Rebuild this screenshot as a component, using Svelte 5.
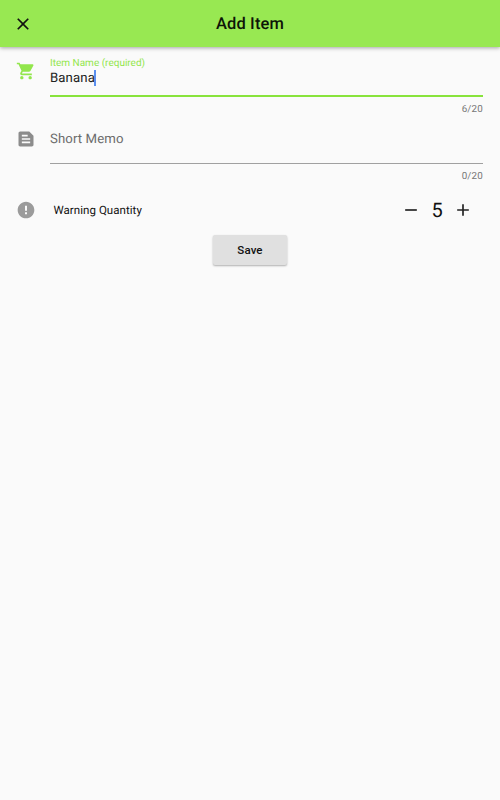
<script>
  let name = $state('Banana');
  let memo = $state('');
  let quantity = $state(5);
  const limit = 20;
</script>

<div class="screen">
  <header>
    <svg class="close" viewBox="0 0 24 24"><path d="M19 6.41 17.59 5 12 10.59 6.41 5 5 6.41 10.59 12 5 17.59 6.41 19 12 13.41 17.59 19 19 17.59 13.41 12z" /></svg>
    <h1>Add Item</h1>
  </header>

  <main>
    <section class="row item">
      <svg class="icon cart" viewBox="0 0 24 24"><path d="M7 18c-1.1 0-1.99.9-1.99 2S5.9 22 7 22s2-.9 2-2-.9-2-2-2zM1 2v2h2l3.6 7.59-1.35 2.45c-.16.28-.25.61-.25.96 0 1.1.9 2 2 2h12v-2H7.42c-.14 0-.25-.11-.25-.25l.03-.12.9-1.63h7.45c.75 0 1.41-.41 1.75-1.03l3.58-6.49c.08-.14.12-.31.12-.48 0-.55-.45-1-1-1H5.21l-.94-2H1zm16 16c-1.1 0-1.99.9-1.99 2s.89 2 1.99 2 2-.9 2-2-.9-2-2-2z" /></svg>
      <div class="field">
        <div class="label">Item Name (required)</div>
        <div class="value"><span>{name}</span><i class="caret"></i></div>
        <div class="line active"></div>
        <div class="count">{name.length}/{limit}</div>
      </div>
    </section>

    <section class="row memo">
      <svg class="icon note" viewBox="0 0 24 24"><path fill-rule="evenodd" d="M15.9 3H5c-1.1 0-2 .9-2 2v14c0 1.1.9 2 2 2h14c1.1 0 2-.9 2-2V8.1L15.9 3zM7 7h7v2H7V7zm10 10H7v-2h10v2zm0-4H7v-2h10v2z" /></svg>
      <div class="field">
        <div class="placeholder">Short Memo</div>
        <div class="line"></div>
        <div class="count">{memo.length}/{limit}</div>
      </div>
    </section>

    <section class="row warning">
      <svg class="icon alert" viewBox="0 0 24 24"><path d="M12 2C6.48 2 2 6.48 2 12s4.48 10 10 10 10-4.48 10-10S17.52 2 12 2zm1.2 15.2h-2.4v-2.4h2.4v2.4zm0-4.2h-2.4V6.8h2.4v6.2z" /></svg>
      <span class="caption">Warning Quantity</span>
      <div class="stepper">
        <svg viewBox="0 0 24 24"><path d="M19 13H5v-2h14v2z" /></svg>
        <span>{quantity}</span>
        <svg viewBox="0 0 24 24"><path d="M19 13h-6v6h-2v-6H5v-2h6V5h2v6h6v2z" /></svg>
      </div>
    </section>

    <button>Save</button>
  </main>
</div>

<style>
  :global(body) {
    background: #fafafa;
  }
  .screen {
    height: 800px;
    background: #fafafa;
    color: #111;
    font-family: Roboto, sans-serif;
    text-rendering: geometricPrecision;
  }
  header {
    display: flex;
    align-items: center;
    height: 47px;
    padding: 0 13px;
    box-sizing: border-box;
    background: #98e852;
    box-shadow: 0 1px 4px rgba(0, 0, 0, 0.35);
  }
  .close {
    width: 20px;
    height: 20px;
    fill: #111;
  }
  h1 {
    flex: 1;
    margin: 2px 20px 0 0;
    text-align: center;
    font-size: 16.5px;
    font-weight: 500;
    letter-spacing: 0.1px;
    line-height: 20px;
    color: #0d1507;
  }
  main {
    display: flex;
    flex-direction: column;
    padding: 0 17px 0 16px;
  }
  .row {
    display: flex;
  }
  .icon {
    flex: none;
    width: 20px;
    height: 20px;
    margin-right: 14px;
    fill: #8c8c8c;
  }
  .field {
    flex: 1;
  }
  .item {
    height: 74px;
    padding-top: 10px;
    box-sizing: border-box;
  }
  .cart {
    margin-top: 4px;
    fill: #92e64c;
  }
  .note {
    margin-top: 8px;
  }
  .label {
    height: 12px;
    font-size: 10px;
    line-height: 13px;
    color: #92e64c;
  }
  .value {
    display: flex;
    height: 26px;
    font-size: 13.2px;
    line-height: 20px;
    letter-spacing: 0.1px;
    color: #222;
  }
  .caret {
    width: 2px;
    height: 16px;
    margin-top: 1px;
    margin-left: -0.5px;
    background: #5b8fee;
  }
  .line {
    height: 1px;
    background: #a0a0a0;
  }
  .line.active {
    height: 2px;
    background: #88e33c;
  }
  .count {
    margin-top: 6px;
    text-align: right;
    font-size: 9.8px;
    line-height: 14px;
    letter-spacing: 0.2px;
    color: #777;
  }
  .memo {
    height: 69px;
  }
  .placeholder {
    height: 42px;
    padding-top: 9px;
    box-sizing: border-box;
    font-size: 13.2px;
    line-height: 20px;
    letter-spacing: 0.1px;
    color: #6c6c6c;
  }
  .warning {
    height: 40px;
    align-items: center;
  }
  .alert {
    fill: #9b9b9b;
  }
  .caption {
    flex: 1;
    padding-left: 3.5px;
    font-size: 11.5px;
    letter-spacing: 0.05px;
  }
  .stepper {
    display: flex;
    align-items: center;
    padding-right: 10px;
  }
  .stepper svg {
    width: 20px;
    height: 20px;
    fill: #222;
  }
  .stepper span {
    width: 32px;
    text-align: center;
    font-size: 20px;
  }
  button {
    align-self: center;
    width: 74px;
    height: 30px;
    margin-top: 5px;
    margin-left: 1px;
    padding: 0;
    border: 0;
    border-radius: 2px;
    background: #e0e0e0;
    box-shadow: 0 1px 2px rgba(0, 0, 0, 0.3);
    font: 500 11.5px Roboto, sans-serif;
    letter-spacing: 0.1px;
    color: #111;
  }
</style>
